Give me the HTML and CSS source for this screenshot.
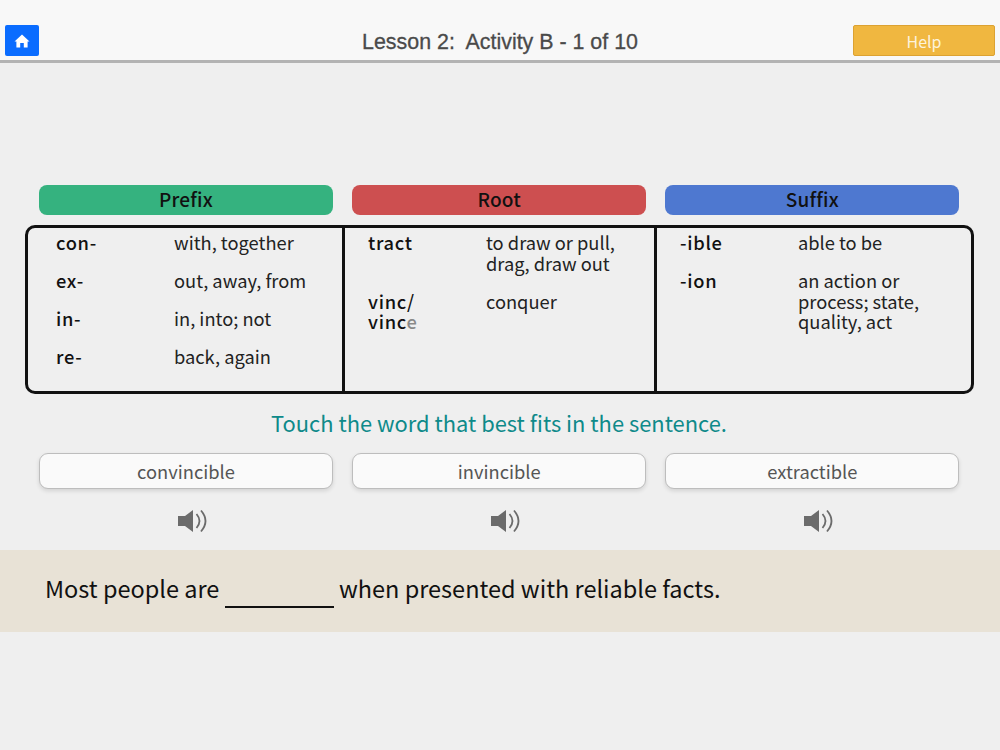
FILE: index.html
```html
<!DOCTYPE html>
<html lang="en">
<head>
<meta charset="utf-8">
<title>Lesson 2: Activity B</title>
<link rel="stylesheet" href="styles.css">
</head>
<body>
<header class="topbar">
  <button class="home" aria-label="Home">
    <svg width="18" height="18" viewBox="0 0 18 18"><path d="M9 2.5 L16.5 9.6 L14.6 9.6 L14.6 15.6 L10.8 15.6 L10.8 11 L7.2 11 L7.2 15.6 L3.4 15.6 L3.4 9.6 L1.5 9.6 Z" fill="#fff"/></svg>
  </button>
  <h1 class="title">Lesson 2:&nbsp; Activity B - 1 of 10</h1>
  <button class="help">Help</button>
</header>
<main>
  <div class="row heads">
    <div class="head prefix">Prefix</div>
    <div class="head root">Root</div>
    <div class="head suffix">Suffix</div>
  </div>
  <div class="table">
    <div class="col">
      <div class="entry"><b>con-</b><span>with, together</span></div>
      <div class="entry"><b>ex-</b><span>out, away, from</span></div>
      <div class="entry"><b>in-</b><span>in, into; not</span></div>
      <div class="entry"><b>re-</b><span>back, again</span></div>
    </div>
    <div class="col">
      <div class="entry"><b>tract</b><span>to draw or pull,<br>drag, draw out</span></div>
      <div class="entry"><b>vinc/<br>vinc<i class="silent">e</i></b><span>conquer</span></div>
    </div>
    <div class="col">
      <div class="entry"><b>-ible</b><span>able to be</span></div>
      <div class="entry"><b>-ion</b><span>an action or<br>process; state,<br>quality, act</span></div>
    </div>
  </div>
  <p class="prompt">Touch the word that best fits in the sentence.</p>
  <div class="row choices">
    <button class="choice">convincible</button>
    <button class="choice">invincible</button>
    <button class="choice">extractible</button>
  </div>
  <div class="row audio">
    <div class="spk"><svg width="30" height="24" viewBox="0 0 30 24"><path d="M1 7 H8 L16 1 V23 L8 17 H1 Z" fill="#6b6b6b"/><path d="M19.5 5 Q25.5 12 19.5 19 M24 1.5 Q33 12 24 22.5" fill="none" stroke="#6b6b6b" stroke-width="1.8"/></svg></div>
    <div class="spk"><svg width="30" height="24" viewBox="0 0 30 24"><path d="M1 7 H8 L16 1 V23 L8 17 H1 Z" fill="#6b6b6b"/><path d="M19.5 5 Q25.5 12 19.5 19 M24 1.5 Q33 12 24 22.5" fill="none" stroke="#6b6b6b" stroke-width="1.8"/></svg></div>
    <div class="spk"><svg width="30" height="24" viewBox="0 0 30 24"><path d="M1 7 H8 L16 1 V23 L8 17 H1 Z" fill="#6b6b6b"/><path d="M19.5 5 Q25.5 12 19.5 19 M24 1.5 Q33 12 24 22.5" fill="none" stroke="#6b6b6b" stroke-width="1.8"/></svg></div>
  </div>
  <div class="sentence">Most people are <span class="blank"></span> when presented with reliable facts.</div>
</main>
</body>
</html>
```
FILE: styles.css
```css
* { box-sizing: border-box; }
html, body { margin: 0; height: 100%; }
body {
  width: 1000px;
  height: 750px;
  overflow: hidden;
  background: #efefef;
  font-family: "Noto Sans CJK SC", "Noto Sans", sans-serif;
  color: #111;
}
button { font-family: inherit; padding: 0; }

.topbar {
  height: 63px;
  background: #f8f8f8;
  border-bottom: 3px solid #b3b3b3;
  display: grid;
  grid-template-columns: 1fr auto 1fr;
  align-items: end;
  padding: 0 5px 4px;
}
.home {
  justify-self: start;
  width: 34px;
  height: 31px;
  background: #0a6cff;
  border: 0;
  border-radius: 2px;
  display: flex;
  align-items: center;
  justify-content: center;
}
.title {
  margin: 0;
  font-family: "Liberation Sans", Arial, sans-serif;
  font-size: 21.4px;
  font-weight: 400;
  color: #4a4a4a;
  line-height: 27px;
  -webkit-text-stroke: 0.3px #4a4a4a;
}
.help {
  justify-self: end;
  width: 142px;
  height: 31px;
  background: #f0b740;
  border: 1px solid #dca232;
  border-radius: 2px;
  color: #fdf3dc;
  font-size: 16px;
}

main { padding-top: 122px; }
.row {
  display: grid;
  grid-template-columns: repeat(3, 294px);
  column-gap: 19.2px;
  padding-left: 39px;
}
.head {
  height: 30px;
  border-radius: 8px;
  text-align: center;
  font-size: 19px;
  font-weight: 500;
  line-height: 28px;
  letter-spacing: 0.2px;
}
.prefix { background: #35b27f; }
.root { background: #cd4f50; }
.suffix { background: #4e78d0; }

.table {
  margin: 10px 0 0 25px;
  width: 949px;
  height: 169px;
  border: 3px solid #111;
  border-radius: 10px;
  display: grid;
  grid-template-columns: 317px 312px 1fr;
}
.col {
  padding: 4px 0 0 23px;
  border-right: 3px solid #111;
  display: flex;
  flex-direction: column;
  gap: 17.5px;
}
.col:first-child { padding-left: 28px; }
.col:last-child { border-right: 0; }
.entry {
  display: grid;
  grid-template-columns: 118px 1fr;
  font-size: 18.3px;
  line-height: 20.5px;
}
.entry b { font-weight: 500; letter-spacing: 0.7px; }
.entry span { color: #222; }
.silent { font-style: normal; color: #8a8a8a; }

.prompt {
  margin: 13px 0 0;
  width: 998px;
  text-align: center;
  font-size: 21.9px;
  line-height: 31px;
  color: #0e8a8a;
}
.choices { margin-top: 15px; }
.choice {
  height: 36px;
  background: #fafafa;
  border: 1px solid #bdbdbd;
  border-radius: 9px;
  box-shadow: 0 2px 4px rgba(0,0,0,0.12);
  color: #555;
  font-size: 18.3px;
}
.audio { margin-top: 20px; }
.spk { display: flex; justify-content: center; padding-left: 12px; height: 24px; }

.sentence {
  margin-top: 17px;
  height: 82px;
  background: #e8e2d6;
  padding-left: 45px;
  font-size: 23.5px;
  line-height: 76px;
  color: #111;
}
.blank {
  display: inline-block;
  width: 109px;
  border-bottom: 2px solid #111;
  vertical-align: -10px;
}
```
